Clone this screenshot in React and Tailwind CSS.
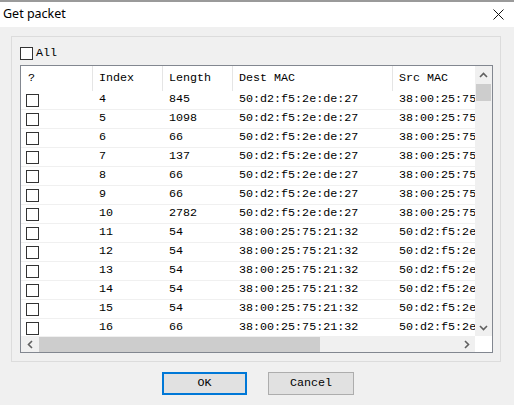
import React from 'react';

const mono = { fontFamily: '"Liberation Mono", "Courier New", monospace' };

const rows = [
  ['4', '845', '50:d2:f5:2e:de:27', '38:00:25:75:21:32'],
  ['5', '1098', '50:d2:f5:2e:de:27', '38:00:25:75:21:32'],
  ['6', '66', '50:d2:f5:2e:de:27', '38:00:25:75:21:32'],
  ['7', '137', '50:d2:f5:2e:de:27', '38:00:25:75:21:32'],
  ['8', '66', '50:d2:f5:2e:de:27', '38:00:25:75:21:32'],
  ['9', '66', '50:d2:f5:2e:de:27', '38:00:25:75:21:32'],
  ['10', '2782', '50:d2:f5:2e:de:27', '38:00:25:75:21:32'],
  ['11', '54', '38:00:25:75:21:32', '50:d2:f5:2e:de:27'],
  ['12', '54', '38:00:25:75:21:32', '50:d2:f5:2e:de:27'],
  ['13', '54', '38:00:25:75:21:32', '50:d2:f5:2e:de:27'],
  ['14', '54', '38:00:25:75:21:32', '50:d2:f5:2e:de:27'],
  ['15', '54', '38:00:25:75:21:32', '50:d2:f5:2e:de:27'],
  ['16', '66', '38:00:25:75:21:32', '50:d2:f5:2e:de:27'],
];

const Box = () => <div className="w-[13px] h-[13px] border border-[#333333] bg-white shrink-0" />;

const Arrow = ({ d }) => (
  <svg width="9" height="6" viewBox="0 0 9 6" className="block">
    <path d={d} fill="none" stroke="#606060" strokeWidth="1.6" />
  </svg>
);

const ArrowV = ({ d }) => (
  <svg width="6" height="9" viewBox="0 0 6 9" className="block">
    <path d={d} fill="none" stroke="#606060" strokeWidth="1.6" />
  </svg>
);

export default function App() {
  return (
    <div className="w-[514px] h-[405px] bg-[#f0f0f0] flex flex-col overflow-hidden text-black">
      {/* title bar */}
      <div className="h-[27px] bg-white border-t-2 border-[#9a9a9a] flex items-center justify-between pl-[3px] pr-[10px]">
        <span className="text-[12.5px] leading-none" style={{ fontFamily: '"Noto Sans", "Open Sans", sans-serif' }}>
          Get packet
        </span>
        <svg width="11" height="11" viewBox="0 0 11 11">
          <path d="M0.5 0.5 L10.5 10.5 M10.5 0.5 L0.5 10.5" stroke="#111" strokeWidth="1" />
        </svg>
      </div>

      {/* group box */}
      <div className="ml-[11px] mt-[9px] w-[490px] h-[326px] border border-[#dcdcdc] pl-[8px] pt-[10px]">
        <div className="flex items-center gap-[3px] h-[13px]">
          <Box />
          <span className="text-[11.7px] leading-none" style={mono}>All</span>
        </div>

        {/* list view */}
        <div className="mt-[5px] w-[473px] h-[288px] border border-[#828790] bg-white flex flex-col" style={mono}>
          <div className="flex h-[270px]">
            <div className="w-[454px] h-[270px] overflow-hidden text-[11.7px]">
              <div className="flex h-[25px] items-center whitespace-nowrap">
                <div className="w-[71px] h-full pl-[7px] flex items-center shrink-0">?</div>
                <div className="w-[70px] h-full pl-[6px] flex items-center border-l border-[#e5e5e5] shrink-0">Index</div>
                <div className="w-[70px] h-full pl-[6px] flex items-center border-l border-[#e5e5e5] shrink-0">Length</div>
                <div className="w-[160px] h-full pl-[6px] flex items-center border-l border-[#e5e5e5] shrink-0">Dest MAC</div>
                <div className="w-[140px] h-full pl-[6px] flex items-center border-l border-[#e5e5e5] shrink-0">Src MAC</div>
              </div>
              {rows.map((r) => (
                <div key={r[0]} className="flex h-[19px] items-center border-b border-[#f0f0f0] whitespace-nowrap">
                  <div className="w-[71px] h-full pl-[5px] flex items-center shrink-0"><Box /></div>
                  <div className="w-[70px] pl-[6px] shrink-0 border-l border-white h-full flex items-center">{r[0]}</div>
                  <div className="w-[70px] pl-[6px] shrink-0 border-l border-white h-full flex items-center">{r[1]}</div>
                  <div className="w-[160px] pl-[6px] shrink-0 border-l border-white h-full flex items-center">{r[2]}</div>
                  <div className="w-[140px] pl-[6px] shrink-0 border-l border-white h-full flex items-center">{r[3]}</div>
                </div>
              ))}
            </div>
            {/* vertical scrollbar */}
            <div className="w-[17px] h-[270px] bg-[#f0f0f0] flex flex-col items-center">
              <div className="h-[17px] flex items-center justify-center"><Arrow d="M1 5 L4.5 1.5 L8 5" /></div>
              <div className="w-[15px] h-[17px] mt-[1px] bg-[#cdcdcd]" />
              <div className="flex-1" />
              <div className="h-[17px] flex items-center justify-center"><Arrow d="M1 1 L4.5 4.5 L8 1" /></div>
            </div>
          </div>
          {/* horizontal scrollbar */}
          <div className="flex h-[16px]">
            <div className="w-[454px] bg-[#f0f0f0] flex items-center">
              <div className="w-[18px] flex items-center justify-center"><ArrowV d="M5 1 L1.5 4.5 L5 8" /></div>
              <div className="w-[281px] h-[15px] bg-[#cdcdcd]" />
              <div className="flex-1" />
              <div className="w-[17px] flex items-center justify-center"><ArrowV d="M1 1 L4.5 4.5 L1 8" /></div>
            </div>
            <div className="w-[17px] bg-white" />
          </div>
        </div>
      </div>

      {/* buttons */}
      <div className="mt-[10px] flex pl-[162px] gap-[21px]" style={mono}>
        <button className="w-[85px] h-[23px] border-2 border-[#0078d7] bg-[#e1e1e1] text-[11.7px] leading-none">OK</button>
        <button className="w-[86px] h-[23px] border border-[#adadad] bg-[#e1e1e1] text-[11.7px] leading-none">Cancel</button>
      </div>
    </div>
  );
}
